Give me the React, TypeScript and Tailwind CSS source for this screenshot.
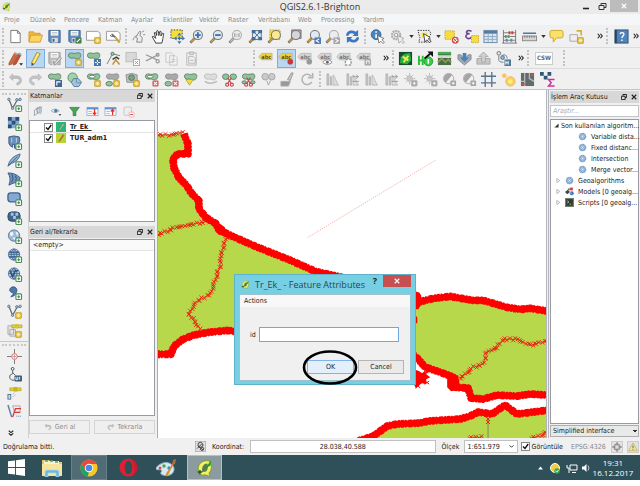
import * as React from "react";
import type { ReactNode } from "react";

type Pt = [number, number];

const GREEN = "#8fc49a";
const GREY = "#a9a9a9";

// Shared icon parts, all drawn on a 16x16 grid

const Blob = ({ c = GREEN, s = "#52705a" }: { c?: string; s?: string }) => (
  <path d="M1.500 4.500C1.500 2 4.500 1.500 7 2.500C9 3 12 1 14 2.500C15.500 4 14.500 8 12 8.500C9.500 8.500 9 7.500 7 7.500C4 8 1.500 7.500 1.500 4.500Z" fill={c} stroke={s} strokeWidth=".8" />
);

const Star = ({ c = "#e0bb3a" }: { c?: string }) => (
  <g>
    <rect x="9" y="9" width="6.500" height="6.500" rx="1" fill={c} stroke="#b8921c" strokeWidth=".6" />
    <path d="M12.250 10v4.500M10 12.250h4.500M10.700 10.700l3.100 3.100M13.800 10.700l-3.100 3.100" stroke="#fff8c9" strokeWidth=".7" />
  </g>
);

const Plus = () => (
  <g>
    <rect x="9.500" y="9.500" width="6" height="6" rx="1" fill="#fff" stroke="#4c8b55" strokeWidth="1.200" />
    <path d="M12.500 11v3M11 12.500h3" stroke="#3f8a4a" strokeWidth="1.200" />
  </g>
);

const Cross = ({ c = "#d65a5a" }: { c?: string }) => (
  <g>
    <rect x="9" y="9" width="6.500" height="6.500" rx="1" fill={c} />
    <path d="M10.500 10.500l3.500 3.500M14 10.500l-3.500 3.500" stroke="#fff" strokeWidth="1.100" />
  </g>
);

const Lens = ({ fill = "#dfe9f2", line = "#777", handle = "#d69a2d" }: { fill?: string; line?: string; handle?: string }) => (
  <g>
    <path d="M6.500 9.500L1.500 14.500" stroke="#555" strokeWidth="2.600" />
    <path d="M6 10L2 14" stroke={handle} strokeWidth="1.800" />
    <circle cx="9.500" cy="6.500" r="4.800" fill={fill} stroke={line} strokeWidth="1.100" />
  </g>
);

const Disk = ({ c = "#5f8fc4", s = "#3d5f8a" }: { c?: string; s?: string }) => (
  <g>
    <path d="M2 1.500h12v13H3.500L2 13Z" fill={c} stroke={s} />
    <rect x="4" y="2" width="8" height="5" fill="#fff" />
    <path d="M5 3.700h6M5 5.300h6" stroke="#aaa" strokeWidth=".7" />
    <rect x="5" y="9.500" width="6.500" height="5" fill="#ddd" />
    <rect x="6" y="10.500" width="2" height="3" fill={s} />
  </g>
);

const Scissors = ({ c = "#c8454b" }: { c?: string }) => (
  <g fill="none" stroke={c} strokeWidth="1.200">
    <circle cx="5.500" cy="13.500" r="1.600" />
    <circle cx="10.500" cy="13.500" r="1.600" />
    <path d="M6.300 12L10 6M9.700 12L6 6" />
  </g>
);

const Globe = () => (
  <g>
    <circle cx="7.500" cy="7" r="6" fill="#b7cee3" stroke="#56789f" />
    <path d="M1.500 7h12M7.500 1v12M3 3.500c3 1.500 6 1.500 9 0M3 10.500c3-1.500 6-1.500 9 0M7.500 1c-4 3-4 9 0 12c4-3 4-9 0-12" stroke="#3c5f8b" fill="none" strokeWidth=".8" />
  </g>
);

const Hist = () => (
  <g fill="#c6c6c6" stroke="#a3a3a3" strokeWidth=".6">
    <path d="M2 2h2v12H2ZM5.500 5h1.500v9H5.500Z" />
    <path d="M8.500 3c2 1 3 7 6 11h-6Z" fill="#dcdcdc" />
  </g>
);

const Tag = ({ c = "#d5d5d5", t = "#777" }: { c?: string; t?: string }) => (
  <g>
    <path d="M0 5.500L3 2.500H14v7H3L0 7Z" fill={c} stroke="#a5a5a5" strokeWidth=".6" />
    <text x="2.500" y="8.300" fontSize="6" fontWeight="bold" fontFamily="DejaVu Sans Condensed, sans-serif" fill={t}>abc</text>
  </g>
);

const Gear = () => (
  <g>
    <circle cx="8" cy="8" r="5.500" fill="#a9c6e6" stroke="#6c96c6" strokeWidth="2.500" strokeDasharray="2.300 1" />
    <circle cx="8" cy="8" r="4.300" fill="#b9d0ea" stroke="#5f8dc2" strokeWidth=".8" />
    <circle cx="8" cy="8" r="1.700" fill="#fff" stroke="#5f8dc2" />
  </g>
);

const Leaf = () => (
  <g>
    <path d="M11 1.500C5 1 1.500 5 2 9.500C2 13.500 5 15 8 14L12.500 15.500L11.500 12.500C14 10 15 5 11 1.500Z" fill="#eff35d" stroke="#7c9424" strokeWidth=".7" />
    <path d="M10 4C6 4 5 8 5.500 11.500L9 11C11 9 11 6 10 4Z" fill="#5c7a4d" />
    <path d="M5 12L13.500 1L12.800 6L10 7Z" fill="#249b39" />
    <path d="M1.500 11.500h4M3.500 9.800v4" stroke="#2d542a" strokeWidth="1.300" />
  </g>
);

const Sun = () => (
  <g stroke="#b5b5b5">
    <circle cx="7" cy="7" r="3" fill="#c8c8c8" />
    <path d="M7 1v2M7 11v2M1 7h2M11 7h2M3 3l1.200 1.200M11 3L9.800 4.200M3 11l1.200-1.200" />
    <rect x="9" y="9" width="6" height="6" rx="1" fill="#a8a8a8" />
  </g>
);

const Contrast = () => (
  <g>
    <circle cx="7" cy="7" r="5.500" fill="#f0f0f0" stroke="#aaa" />
    <path d="M11 3A5.500 5.500 0 1 0 4 11.500Z" fill="#a5a5a5" />
    <rect x="9" y="9" width="6" height="6" rx="1" fill="#a5a5a5" />
  </g>
);

const VNodes = () => (
  <g fill="none" stroke="#55779d">
    <path d="M2 2.500L6 12L11 3H14" strokeWidth="1.300" stroke="#666" />
    <circle cx="2" cy="2.500" r="1.300" fill="#b7cbe0" />
    <circle cx="6" cy="12" r="1.300" fill="#b7cbe0" />
    <circle cx="10.500" cy="3" r="1.300" fill="#b7cbe0" />
    <circle cx="14" cy="2.500" r="1.300" fill="#b7cbe0" />
  </g>
);

const undo = "M5 2L1.500 5.500L5 9V6.800H10C13 7 13 11 9.500 11.500V14C16 13 16 5 10 4.200H5Z";

const icons: Record<string, ReactNode> = {
  newDoc: <path d="M3 1.500h7L13 4.500v10H3ZM10 1.500v3h3" fill="#fff" stroke="#777" />,
  open: (
    <g stroke="#c99023" strokeWidth=".8">
      <path d="M1 3h5l1 1.500h6V13H1Z" fill="#f3b93c" />
      <path d="M3 6.500h12.500L13 14H1Z" fill="#fbd55f" />
    </g>
  ),
  save: <Disk />,
  saveAs: (
    <g>
      <Disk />
      <rect x="9" y="9" width="6.500" height="6.500" rx="1" fill="#417c4d" />
      <path d="M10.500 14l3.500-3.500" stroke="#fff" strokeWidth="1.200" />
    </g>
  ),
  newComposer: <g><path d="M.5 2.500h12l2.500 2v7.500H.5Z" fill="#fff" stroke="#999" /><Star /></g>,
  composerManager: (
    <g>
      <path d="M.5 2.500h12l2.500 2v7.500H.5Z" fill="#fff" stroke="#999" />
      <path d="M6 5.500L10 9" stroke="#666" strokeWidth="1.800" />
      <path d="M10 9L14.500 14.500" stroke="#caa22f" strokeWidth="2.200" />
      <path d="M4.500 6.500c.5 2 2.500 2 3.500 1" stroke="#555" fill="none" />
    </g>
  ),
  touch: (
    <g stroke="#888" fill="#eee">
      <path d="M6 14L7 10L5 9L9 2.500L10.500 3L9.500 7L12 9L11.500 14Z" />
      <path d="M2 12c1-3 2-4 4-5M12 3l2-1M13 6l2 0" fill="none" />
    </g>
  ),
  pan: <path d="M5 15C4 12 1.500 10 1.500 8C3 7.500 4 9 5 10L3.500 4C4.500 3 5.500 4 6 7L6.200 2C7.500 1 8.200 2 8.300 7L9.500 2.500C11 2 11 3.500 10.500 7.500L12.500 4.500C14 4.500 13.500 6 13 8C12.500 11 12.500 12 11.500 15Z" fill="#fff" stroke="#333" />,
  panSel: (
    <g>
      <path d="M1 1h12v9H1Z" fill="#f6df36" stroke="#333" strokeDasharray="1.500 1.500" />
      <path d="M10 4l2.200 3H7.800ZM10 16l2.200-3H7.800ZM4 10l3-2.200v4.400ZM16 10l-3-2.200v4.400Z" fill="#3d72b0" />
      <path d="M10 8v4M8 10h4" stroke="#3d72b0" strokeWidth="1.500" />
    </g>
  ),
  zoomIn: <g><Lens /><path d="M9.500 3.500v6M6.500 6.500h6" stroke="#3a74b4" strokeWidth="2" /></g>,
  zoomOut: <g><Lens /><path d="M6.500 6.500h6" stroke="#3a74b4" strokeWidth="2" /></g>,
  zoomNative: (
    <g>
      <Lens fill="#ececec" line="#aaa" handle="#bbb" />
      <path d="M7.300 4.500v4M11.700 4.500v4M9.500 5.300v.9M9.500 7.300v.9" stroke="#888" />
    </g>
  ),
  zoomFull: (
    <g>
      <Lens />
      <path d="M4 1h4v3.500H4ZM11 1h4v3.500h-4ZM4 8.500h4V12H4ZM11 8.500h4V12h-4Z" fill="#3f6da4" />
      <path d="M5 2l9 9M14 2l-9 9" stroke="#3f6da4" />
    </g>
  ),
  zoomSel: <g><path d="M3 1h11v10H3Z" fill="#f6df36" stroke="#999" strokeDasharray="1.500 1.500" /><Lens fill="#fbe98e" /></g>,
  zoomLayer: <g><path d="M5 1h10v9H5Z" fill="#bbb2be" stroke="#756a78" /><Lens fill="#d7d3da" /></g>,
  zoomLast: <g><Lens /><rect x="9" y="9" width="7" height="7" fill="#4c7fb9" /><path d="M14 10.500l-3 2l3 2" stroke="#fff" fill="none" strokeWidth="1.200" /></g>,
  zoomNext: <g><Lens fill="#ececec" line="#aaa" /><rect x="9" y="9" width="7" height="7" fill="#a7a7a7" /><path d="M11 10.500l3 2l-3 2" stroke="#fff" fill="none" strokeWidth="1.200" /></g>,
  refresh: (
    <g fill="#3b78c0">
      <path d="M1 7C1.500 2 7 0 11.500 3L14 1V7.500H8L10 5.500C7 3.500 4 4.500 3.500 7.500Z" />
      <path d="M15 9C14.500 14 9 16 4.500 13L2 15V8.500H8L6 10.500C9 12.500 12 11.500 12.500 8.500Z" />
    </g>
  ),
  identify: (
    <g>
      <circle cx="6.500" cy="6" r="5.200" fill="#4b83bf" stroke="#356496" />
      <path d="M6.500 5.500v4M6.500 2.500v1.500" stroke="#fff" strokeWidth="1.700" />
      <path d="M8 7l1.500 8l2-2l2.500 2.500l1.300-1.500L12.800 11.500l2-1.500Z" fill="#fff" stroke="#555" strokeWidth=".8" />
    </g>
  ),
  action: (
    <g>
      <circle cx="6.500" cy="6.500" r="4.500" fill="#dedede" stroke="#aaa" strokeWidth="2" strokeDasharray="2 .8" />
      <circle cx="6.500" cy="6.500" r="1.700" fill="#fff" stroke="#999" />
      <path d="M8 7l1.500 8l2-2l2.500 2.500l1.300-1.500L12.800 11.500l2-1.500Z" fill="#eee" stroke="#999" strokeWidth=".8" />
    </g>
  ),
  select: (
    <g>
      <path d="M1 1.500h12L15 5l-2 3l2 6H2l1-5Z" fill="#eee" stroke="#333" strokeDasharray="1.500 1.200" />
      <path d="M5 4h6v5H5Z" fill="#f6df36" />
      <path d="M7 5l1.500 9l2-2.500l3 3l1.300-1.500L12 10.500l2-1.500Z" fill="#fff" stroke="#444" />
    </g>
  ),
  deselect: (
    <g>
      <rect x="1" y="2" width="10" height="9" fill="#f7dc3d" stroke="#c7a92a" strokeDasharray="1.500 1" />
      <circle cx="12" cy="12" r="3" fill="#fff" stroke="#d44a4a" strokeWidth="1.400" />
      <path d="M10 10l4 4M10 14l4-4" stroke="#d44a4a" />
    </g>
  ),
  expression: (
    <g>
      <path d="M8 2.500C5 .5 2 2 3 4.500L6 5C2 5 1 8 3 9.500S7 10 8 8.500" fill="none" stroke="#6d4590" strokeWidth="1.700" />
      <rect x="8" y="7" width="7.500" height="7.500" fill="#f7dc3d" stroke="#c7a92a" strokeDasharray="1.500 1" />
    </g>
  ),
  table: (
    <g>
      <rect x="1" y="1.500" width="14" height="13" fill="#dce7f1" stroke="#6887a5" />
      <path d="M1 2h14v3H1Z" fill="#567ba1" />
      <path d="M1 8h14M1 11h14M5.500 5v9M10 5v9" stroke="#90a9c0" />
    </g>
  ),
  abacus: (
    <g>
      <path d="M1.500 1v14M14.500 1v14M1.500 4h13M1.500 8h13M1.500 12h13M0 15h16" stroke="#777" />
      <path d="M7 4h5" stroke="#d13d37" strokeWidth="3" strokeDasharray="2 1" />
      <path d="M3 8h6" stroke="#58a35c" strokeWidth="3" strokeDasharray="2 1" />
      <path d="M4 12h8" stroke="#5c87b4" strokeWidth="3" strokeDasharray="2 3" />
    </g>
  ),
  ruler: (
    <g>
      <path d="M1 4.500h14" stroke="#426e98" strokeWidth="1.500" />
      <rect x=".5" y="7.500" width="15" height="5" fill="#d5d5d5" stroke="#888" />
      <path d="M3 7v2.500M5.500 7v2.500M8 7v2.500M10.500 7v2.500M13 7v2.500" stroke="#666" strokeWidth=".7" />
    </g>
  ),
  tip: <path d="M3 1.500h10q2 0 2 2v4q0 2-2 2H8L4.500 14V9.500H3q-2 0-2-2v-4q0-2 2-2Z" fill="#fbe06a" stroke="#c9a72e" />,
  bookmark: (
    <g>
      <path d="M1 6h8v7H1Z" fill="#eee" stroke="#aaa" />
      <path d="M8 2h5v5" fill="none" stroke="#d5b02d" strokeWidth="1.700" />
      <Star />
    </g>
  ),
  help: (
    <g>
      <rect x="1" y="1" width="14" height="14" fill="#4f83bb" stroke="#34506f" />
      <path d="M2 1v14" stroke="#2e4055" strokeWidth="2" />
      <path d="M6.500 5.500C7 3 11 3.500 10.500 6C10 7.500 8.500 7.500 8.500 9.500M8.500 11.200v1.500" stroke="#fff" fill="none" strokeWidth="1.500" />
    </g>
  ),
  edits: (
    <g>
      <path d="M1 13L7 2l3 1.500L4 14L1 15Z" fill="#d9653a" stroke="#8f4b2d" strokeWidth=".7" />
      <path d="M5.500 13L11.500 2.500L14 4L8.500 14L5.500 15Z" fill="#c75030" stroke="#7f4630" strokeWidth=".7" />
      <path d="M7 2l3 1.500M11.500 2.500L14 4" stroke="#aaa" strokeWidth="2" />
      <path d="M12 13h4l-2 2.500Z" fill="#222" />
    </g>
  ),
  pencil: (
    <g>
      <path d="M4 12L9.500 1.500L13 3L7.500 13L4 15.500Z" fill="#f5d846" stroke="#8c7e39" strokeWidth=".8" />
      <path d="M6 12.500L11 2.500" stroke="#fff3a1" strokeWidth="1.200" />
      <path d="M4 12.500v3l2.500-1.500" fill="#444" />
    </g>
  ),
  saveGrey: <g><Disk c="#bcbcbc" s="#a0a0a0" /><path d="M8 13l5.500-7l2 1.500L10 14l-2 1Z" fill="#ddd" stroke="#999" /></g>,
  addFeature: <g><Blob /><Star /></g>,
  moveFeature: (
    <g>
      <Blob />
      <rect x="8.500" y="8.500" width="7.500" height="7.500" fill="#4776a9" />
      <path d="M12.200 9.500v5.500M9.500 12.200h5.500" stroke="#fff" strokeWidth="1.200" strokeDasharray="2 1.500" />
    </g>
  ),
  nodeTool: (
    <g>
      <path d="M1 14L7 3L15 5" fill="none" stroke="#777" />
      <circle cx="7" cy="3" r="1.700" fill="#9ac69b" stroke="#58815a" />
      <path d="M7 9l4-2.500l3 2" fill="none" stroke="#444" strokeWidth="1.700" />
      <path d="M7 14.500l4-6M10 9l4.500 5.500" stroke="#bf9240" strokeWidth="1.600" />
    </g>
  ),
  deleteSel: <g><rect x="1" y="1.500" width="11" height="10" fill="#d9d9d9" stroke="#bdbdbd" /><rect x="9" y="9" width="6.500" height="6.500" fill="#fff" stroke="#aaa" /><path d="M10.500 10.500l3.500 3.500M14 10.500l-3.500 3.500" stroke="#999" /></g>,
  cut: (
    <g stroke="#999" fill="none" strokeWidth="1.300">
      <path d="M1 4l12 5.500M1 10.500L14 4" />
      <circle cx="13.500" cy="11" r="1.700" />
      <circle cx="13.500" cy="4" r="1.500" />
    </g>
  ),
  copy: <path d="M2 2h6l2 2v8H2ZM6 5h6l2 2v8H6ZM8 9h4M8 11h4" fill="#f2f2f2" stroke="#c6c6c6" />,
  paste: <path d="M3 2h10v13H3ZM6 1h4v3H6ZM5 6h5l2 2v5H5ZM6.500 10h4" fill="#f1f1f1" stroke="#b5b5b5" />,
  label: <Tag c="#f1d43b" t="#5f521c" />,
  labelPin: <g><Tag c="#f1d43b" t="#5f521c" /><circle cx="12" cy="11.500" r="3" fill="#c93834" /></g>,
  labelPinGrey: <g><Tag /><circle cx="12" cy="11.500" r="3" fill="#999" /></g>,
  labelShow: <g><Tag /><path d="M5 12c3-3.500 7-3.500 10 0c-3 3-7 3-10 0Z" fill="#fff" stroke="#888" /><circle cx="10" cy="12" r="1.500" fill="#666" /></g>,
  labelMove: <g><Tag /><path d="M9 9h6v6H9Z" fill="#fff" stroke="#999" strokeWidth="1.500" strokeDasharray="2.500 1.500" /></g>,
  labelRotate: <g><Tag /><rect x="8" y="8.500" width="7" height="7" rx="1" fill="#aaa" /><path d="M10 13.500V10.500h3v3" stroke="#fff" fill="none" /></g>,
  dem: (
    <g>
      <rect x="1" y="1" width="14" height="14" fill="#164b2b" />
      <path d="M2 13L3 6L7 3L13 2L14 10L10 14Z" fill="#2fae45" />
      <path d="M5 6l6 4M11 5L6 12" stroke="#f1ef4c" strokeWidth="2" />
    </g>
  ),
  hd: (
    <g>
      <path d="M1 5v10M5 5v10M1 10h4" stroke="#27bb36" strokeWidth="2" fill="none" />
      <circle cx="11" cy="11" r="4.800" fill="#3acb48" stroke="#1a8a2a" strokeWidth=".8" />
      <path d="M11 8.500v5" stroke="#fff" strokeWidth="1.700" />
      <path d="M7 8l6-5" stroke="#111" strokeWidth="2" />
      <path d="M10 .5h6v6Z" fill="#111" />
    </g>
  ),
  photo: <g><rect x="1" y="1" width="14" height="14" fill="#4b6b43" /><path d="M1 1h14v2.500H1Z" fill="#41ae52" /><path d="M1 4.500h14v3H1Z" fill="#cfdad0" /><path d="M1 12l4-4l4 4l3-3l3 3" stroke="#81985b" strokeWidth="2" fill="none" /></g>,
  download: <g><path d="M1 4h3l4 5l4-5h3v5l-7 6l-7-6Z" fill="#a5abb0" stroke="#75808a" strokeWidth=".8" /><path d="M6 2h4v5h3l-5 5l-5-5h3Z" fill="#4d83b4" /></g>,
  upload: <g><path d="M1 8h14v6H1Z" fill="#c6c6c6" stroke="#aaa" /><path d="M6 12h4V6h3L8 1L3 6h3Z" fill="#cfcfcf" stroke="#aaa" /></g>,
  osm: (
    <g>
      <circle cx="3" cy="2.500" r="2" fill="#ddd" stroke="#777" />
      <path d="M3 5v5q0 2 5 2M6 5q5-3 6 3" stroke="#777" fill="none" />
      <circle cx="7" cy="7" r="2" fill="#95b4cd" stroke="#53758f" />
      <rect x="9" y="9" width="7" height="7" fill="#4f7999" />
      <path d="M10.500 10.500v4M13 10.500v4M10.500 12.500h2.500" stroke="#fff" />
    </g>
  ),
  undo: <path d={undo} fill="#c2c2c2" stroke="#a5a5a5" strokeWidth=".6" />,
  redo: <g transform="matrix(-1 0 0 1 16 0)"><path d={undo} fill="#c7c7c7" stroke="#a8a8a8" strokeWidth=".6" /></g>,
  rotate: <g><Blob /><rect x="8.500" y="8.500" width="7.500" height="7.500" fill="#41668f" /><path d="M10.500 14.500v-4h4" stroke="#fff" fill="none" strokeWidth="1.200" /></g>,
  simplify: <g><circle cx="6" cy="6" r="5" fill="#9fd3a8" stroke="#5c8e66" /><path d="M7 7h5l3.500 4l-3 4.500H7.500L4.500 11Z" fill="#a5c3d8" stroke="#557c99" /><path d="M10 7.500v4h5" stroke="#6e93ae" /></g>,
  ring: <g><Blob /><ellipse cx="6.500" cy="5" rx="3" ry="1.500" fill="#fff" stroke="#52705a" strokeWidth=".8" /><Star /></g>,
  part: <g><Blob c={GREY} s="#888" /><ellipse cx="4.500" cy="12.500" rx="3.500" ry="2.500" fill={GREEN} stroke="#52705a" strokeWidth=".8" /><Star /></g>,
  fillRing: <g><path d="M1 3q6-3 12 0v8H2Z" fill="#bcbcbc" stroke="#989898" /><circle cx="7" cy="6" r="3" fill="#7ba884" stroke="#54735a" /><Star /></g>,
  deleteRing: <g><Blob /><ellipse cx="6.500" cy="5" rx="3" ry="1.500" fill="#fff" stroke="#52705a" strokeWidth=".8" /><Cross /></g>,
  deletePart: <g><Blob c={GREY} s="#888" /><ellipse cx="4.500" cy="12.500" rx="3.500" ry="2.500" fill={GREEN} stroke="#52705a" strokeWidth=".8" /><Cross /></g>,
  reshape: <g><Blob /><path d="M3 8h8l-4 6Z" fill="#f5dc42" stroke="#a89a3c" strokeWidth=".8" /></g>,
  offset: <g><Blob c="#dcdcdc" s="#b5b5b5" /><path d="M2 10q5 4 13 0" stroke="#bbb" fill="none" strokeWidth="1.500" /></g>,
  split: <g><ellipse cx="4" cy="5" rx="3.500" ry="3" fill={GREEN} stroke="#52705a" strokeWidth=".8" /><ellipse cx="12" cy="5" rx="3.500" ry="3" fill={GREEN} stroke="#52705a" strokeWidth=".8" /><Scissors /></g>,
  splitPart: <g><Blob /><ellipse cx="3.500" cy="11" rx="2.500" ry="1.700" fill={GREEN} stroke="#52705a" strokeWidth=".8" /><ellipse cx="12.500" cy="11" rx="2.500" ry="1.700" fill={GREEN} stroke="#52705a" strokeWidth=".8" /><Scissors /></g>,
  merge: <g fill="#cacaca" stroke="#a5a5a5"><ellipse cx="4.500" cy="5" rx="3.500" ry="3.500" /><ellipse cx="11.500" cy="5" rx="3.500" ry="3.500" /><path d="M6 9l2 5l2-5" fill="none" /></g>,
  mergeAttr: <g><path d="M8 8L12 1h2l-3 8Z" fill="#c6c6c6" stroke="#999" /><path d="M1 10h10l-2 5H1Z" fill="#999" stroke="#aaa" /></g>,
  rotateSym: <path d="M12.500 10.500A5.500 5.500 0 1 1 12 4.500M13.500 1v5h-5" fill="none" stroke="#b3b3b3" strokeWidth="1.700" />,
  hist: <Hist />,
  histFull: <g><Hist /><path d="M8 5h6M8 10h7M12 3l2.500 2l-2.500 2" stroke="#999" fill="none" /></g>,
  sun: <g><Sun /><path d="M12 10.500v3M10.500 12h3" stroke="#fff" /></g>,
  contrast: <g><Contrast /><path d="M12 10.500v3M10.500 12h3" stroke="#fff" /></g>,
  grid: <path d="M4.500 0v16M11.500 0v16M0 4.500h16M0 11.500h16" stroke="#55738b" strokeWidth="1.400" fill="none" />,
  heat: <g><circle cx="3.500" cy="4" r="2.500" fill="#fbc45b" /><circle cx="10" cy="10" r="5" fill="#f9cf5d" stroke="#f3b268" /><circle cx="10" cy="10" r="2.300" fill="#fff37b" /></g>,
  roads: <g><rect x="1" y="1" width="14" height="14" fill="#626b6d" /><path d="M5 1v14M10 1v6l5 3M1 10h4" stroke="#bbb" strokeWidth="1.300" fill="none" /><circle cx="3.500" cy="13" r="1.500" fill="#c95350" /><circle cx="13" cy="3" r="1.500" fill="#c95350" /></g>,
  stats: <g><path d="M0 0h4v4H0ZM4 4h4v4H4ZM8 0h4v4H8Z" fill="#2f5878" /><path d="M15.500 8H9l3 3.500L9 15h6.500" stroke="#d12b98" strokeWidth="1.500" fill="none" /></g>,
  vector: <g><VNodes /><Plus /></g>,
  raster: <g><rect x="1" y="1" width="12" height="12" fill="#86a9cc" /><path d="M1 1h4v4H1ZM9 1h4v4H9ZM5 5h4v4H5ZM1 9h4v4H1Z" fill="#294f7a" /><Plus /></g>,
  postgis: <g><path d="M2 2q5-2 11 0q2 6-2 8v4H8v-4H6v3q-3-1-4-4Z" fill="#688fba" stroke="#395a80" /><path d="M5 3v5M10 3v5" stroke="#c0d3e6" /><Plus /></g>,
  spatialite: <g><path d="M1 14Q3 4 14 1Q13 8 5 11Z" fill="#91b3d2" stroke="#44678c" /><path d="M1 14L11 4" stroke="#44678c" /><Plus /></g>,
  mssql: <g><path d="M1 1q8 0 13 5l-2 6Q8 10 2 14Q5 7 1 1Z" fill="#6f94bd" stroke="#39597f" /><path d="M5 2q3 5 0 9M9 4q2 3 0 6" stroke="#34557b" fill="none" /><Plus /></g>,
  oracle: <g><rect x="1" y="2" width="13" height="9.500" rx="3" fill="#85a9d4" stroke="#3d638f" strokeWidth="1.400" /><Plus /></g>,
  sqlAny: <g><rect x="1" y="2" width="13" height="10" rx="4" fill="#3f658f" stroke="#2a486b" /><path d="M4 3h3v3H4ZM9 3h3v3H9ZM6.500 6.500h3v3h-3Z" fill="#a7c3df" /><Plus /></g>,
  wms: <g><circle cx="7.500" cy="7" r="6" fill="#9dbad6" stroke="#56789f" /><path d="M3 4l3-1l1 3l-3 2ZM9 3l3 1l-1 4ZM6 9l3 0l-1 3Z" fill="#f4f8fb" /><Plus /></g>,
  wcs: <g><Globe /><path d="M2 4h11v1.500H2ZM2 8.500h11v1.500H2Z" fill="#3f6894" /><Plus /></g>,
  wfs: <g><Globe /><path d="M3 4l3 6l3-6h3" stroke="#2d4f79" fill="none" strokeWidth="1.500" /><Plus /></g>,
  comma: <g><path d="M4 3C8 0 12 4 10 8C9 11 6 12.500 4 12.500C7 10 7 9 6 8C3 8 2 5 4 3Z" fill="#4d78aa" stroke="#34577f" /><Plus /></g>,
  newShape: <g><VNodes /><Star /></g>,
  gpx: <g><path d="M1 3h6v9H1ZM3 7h6v7H3Z" fill="#e4e4e4" stroke="#aaa" /><path d="M5 2h4v3H5ZM12 2h4v3h-4Z" fill="#e5d72d" stroke="#aa9f20" strokeWidth=".7" /><path d="M9 1h3v5H9Z" fill="#d5c535" /><Star /></g>,
  capture: <g><path d="M8 0v5M8 11v5M0 8h5M11 8h5" stroke="#777" /><circle cx="8" cy="8" r="3" fill="#fff" stroke="#d06363" /><path d="M6 8h4M8 6v4" stroke="#d06363" strokeWidth=".7" /></g>,
  evis: <g><circle cx="6" cy="2" r="1.500" fill="#fff" stroke="#444" /><path d="M6 4v3L3 9v3l2 2h3M6 6l3 3" stroke="#555" fill="none" /><rect x="8" y="9" width="8" height="6.500" rx="1" fill="#355979" /><path d="M9.500 10.500v3h2v-3M13.500 10.500v3" stroke="#fff" fill="none" /></g>,
  gps: <g><path d="M3 2h4v3H3ZM11 2h4v3h-4Z" fill="#e5d72d" stroke="#aa9f20" strokeWidth=".7" /><path d="M7 1h4v5H7Z" fill="#c4b434" /><rect x="1" y="9" width="3" height="5" fill="#cbdcea" stroke="#517597" /><path d="M6 9l2-2M6 12l3-3" stroke="#bbb" /></g>,
  trace: <g><path d="M1 1l4 13" stroke="#567fae" strokeWidth="1.500" /><path d="M6 2h8v7H8Z" fill="#eee" stroke="#aaa" /><path d="M6 14L9 5h6M8 9h6" stroke="#dd3939" fill="none" strokeWidth="1.400" /><path d="M10 13h5" stroke="#567fae" strokeDasharray="1 1" /></g>,
  group: <path d="M2 6l5-4v8l-5 4ZM5 5l5-4v8l-3 2ZM8 4l4-3v8l-2 3" fill="#e8edf2" stroke="#7d8b9b" />,
  eye: <g><path d="M0 7q5-5 12 0q-6 5-12 0Z" fill="#e8eef3" stroke="#8198ae" /><circle cx="7" cy="7" r="2.500" fill="#4a7eaf" /><path d="M11 12h4l-2 2Z" fill="#222" /></g>,
  filter: <path d="M1 2h14L10 8.500V14H6V8.500Z" fill="#4ba354" stroke="#2f753b" />,
  expand: <g><rect y="2" width="16" height="12" fill="#fff" stroke="#709bce" /><path d="M0 2h16v3H0Z" fill="#5f94dc" /><path d="M2 8h5M2 11h5" stroke="#709bce" /><path d="M11 4v8M8.500 9.500L11 12.500L13.500 9.500" stroke="#e23324" strokeWidth="1.800" fill="none" /></g>,
  collapse: <g><rect y="2" width="16" height="12" fill="#fff" stroke="#709bce" /><path d="M0 2h16v3H0Z" fill="#5f94dc" /><path d="M2 8h5M2 11h5" stroke="#709bce" /><path d="M11 13V5M8.500 8L11 5L13.500 8" stroke="#e23324" strokeWidth="1.800" fill="none" /></g>,
  remove: <g><rect x="1.500" y="1.500" width="11" height="12" rx="1" fill="#eee" stroke="#b7b7b7" /><rect x="9" y="9" width="7" height="7" rx="1" fill="#fff" stroke="#e29b9b" /><path d="M10.500 12.500h4" stroke="#d44" strokeWidth="1.500" /></g>,
  gear: <Gear />,
  models: <g><path d="M0 9l5-4l4 4l-5 4Z" fill="#444" /><circle cx="7" cy="4" r="2" fill="#777" /><path d="M9 1h5v5H9Z" fill="#d83e3a" /><circle cx="12" cy="11" r="3.500" fill="#3777c3" /><path d="M8 9l4 3" stroke="#eee" /></g>,
  scripts: <g><rect x="1" y="1" width="14" height="14" fill="#2e3b30" stroke="#74806f" strokeWidth="2" /><path d="M4 5l3 2l-3 2M8 11h3" stroke="#d7e6c9" fill="none" strokeWidth="1.200" /></g>,
  leaf: <Leaf />,
  toggle: <g><rect x=".5" y=".5" width="15" height="15" fill="#ddd" stroke="#aaa" /><path d="M5 3q4-3 6 1t-3 5q-5 0-3-6M5 8l7 5M3 11l7-7M10 9q4 0 2 4q-4 2-4-2Z" stroke="#333" fill="none" strokeWidth="1.300" /></g>,
  crs: <g><circle cx="8" cy="8" r="5" fill="#bbb" stroke="#858585" strokeWidth="1.500" /><circle cx="8" cy="8" r="2" fill="#ddd" /><path d="M8 0v4M8 12v4M0 8h4M12 8h4" stroke="#777" strokeWidth="1.500" /></g>,
  warn: <g><path d="M8 1.500L15 14H1Z" fill="#f1e6a1" stroke="#b4a24b" /><path d="M8 5.500v4.500M8 11.500v1.300" stroke="#555" strokeWidth="1.400" /></g>,
};

const Icon = ({ name, className = "size-[15px]" }: { name: string; className?: string }) => (
  <svg viewBox="0 0 16 16" className={`${className} shrink-0 overflow-visible`} fill="none" aria-hidden="true">
    {icons[name]}
  </svg>
);

const Tool = ({ name, active = false }: { name: string; active?: boolean }) => (
  <button
    type="button"
    aria-label={name}
    className={`flex h-[19px] min-w-0 items-center justify-center ${active ? "border border-[#79aee0] bg-[#b9d6f3]" : ""}`}
  >
    <Icon name={name} />
  </button>
);

const Grip = () => (
  <div className="mx-[2px] h-4 w-[2px] shrink-0 border-l-2 border-dotted border-[#c2c2c2]" />
);

const Caret = () => (
  <button type="button" aria-label="More options" className="flex w-2 shrink-0 items-center justify-center">
    <svg viewBox="0 0 6 4" className="h-[3px] w-[5px]"><path d="M0 0h6L3 4Z" fill="#333" /></svg>
  </button>
);

const More = ({ down = false }: { down?: boolean }) => (
  <button type="button" aria-label="More tools" className={`flex size-2 shrink-0 items-center justify-center ${down ? "rotate-90" : ""}`}>
    <svg viewBox="0 0 8 8" className="size-[6px]"><path d="M1 1l2.500 3L1 7M4.500 1L7 4L4.500 7" fill="none" stroke="#222" strokeWidth="1.500" /></svg>
  </button>
);

const Group = ({ names, active = [], className }: { names: string[]; active?: string[]; className: string }) => (
  <div className={`grid shrink-0 auto-cols-fr grid-flow-col items-center ${className}`}>
    {names.map((n, i) => <Tool key={i} name={n} active={active.includes(n)} />)}
  </div>
);

const DockTitle = ({ children }: { children: ReactNode }) => (
  <div className="flex h-3 shrink-0 items-center bg-[#d8d8d8] pl-px">
    <h2 className="min-w-0 flex-1 truncate">{children}</h2>
    <button type="button" aria-label="Float" className="flex w-[10px] justify-center">
      <svg viewBox="0 0 8 8" className="size-[6px]"><path d="M2.500 2.500V.7h5v4h-2M.5 3h5v4.500h-5Z" fill="none" stroke="#222" strokeWidth="1.300" /></svg>
    </button>
    <button type="button" aria-label="Close" className="flex w-[10px] justify-center">
      <svg viewBox="0 0 8 8" className="size-[6px]"><path d="M1 1l6 6M7 1L1 7" stroke="#222" strokeWidth="1.500" /></svg>
    </button>
  </div>
);

const Check = ({ id, label }: { id: string; label?: string }) => (
  <span className="grid size-[9px] shrink-0">
    <input id={id} type="checkbox" defaultChecked aria-label={label} className="peer col-start-1 row-start-1 size-[9px] appearance-none border border-[#888] bg-white" />
    <svg viewBox="0 0 9 9" className="pointer-events-none col-start-1 row-start-1 hidden size-[9px] peer-checked:block">
      <path d="M2 4.500l2 2l3.200-4.500" fill="none" stroke="#111" strokeWidth="1.400" />
    </svg>
  </span>
);

// Map geometry

const coastNW: Pt[] = [[183, 133], [187, 143], [187, 153], [177, 153], [172, 158], [173, 167], [178, 177], [186, 185], [190, 192], [198, 200], [198, 208], [205, 217], [215, 223], [218, 229], [230, 235], [255, 246], [288, 259], [315, 271], [342, 277]];
const coastNE: Pt[] = [[412, 292], [418, 302], [425, 300], [433, 298], [450, 296], [473, 300], [483, 300], [507, 307], [520, 309], [530, 308], [549, 311]];
const coastSW: Pt[] = [[156, 354], [170, 354], [173, 346], [182, 339], [192, 335], [208, 332], [228, 330], [242, 333]];
const coastSE: Pt[] = [[410, 352], [417, 358], [425, 367], [440, 372], [453, 377], [453, 387], [468, 388], [471, 398], [483, 399], [497, 395], [517, 396], [530, 394], [549, 395]];
const coastS: Pt[] = [[358, 441], [373, 436], [387, 426], [397, 424], [420, 423], [428, 421], [460, 419], [470, 416], [478, 412], [492, 414], [505, 405], [517, 414], [549, 410]];

const borders: Pt[][] = [
  [[157, 134], [170, 134], [183, 131]],
  [[157, 234], [175, 227], [205, 221], [215, 220]],
  [[226, 237], [220, 253], [220, 263], [210, 293], [195, 302], [188, 313], [200, 330]],
  [[460, 378], [467, 373], [473, 367], [483, 364], [487, 352], [497, 347], [503, 339], [517, 339], [530, 345], [549, 340]],
  [[469, 438], [483, 437]],
  [[531, 438], [541, 436], [548, 431]],
];

const line = (pts: Pt[]) => "M" + pts.map((p) => p.join(" ")).join("L");

// Vertex markers: small crosses along a border
const crosses = (pts: Pt[]) => {
  let d = "";
  for (let i = 1; i < pts.length; i++) {
    const [x0, y0] = pts[i - 1];
    const [x1, y1] = pts[i];
    const n = Math.max(1, Math.round(Math.hypot(x1 - x0, y1 - y0) / 2.4));
    for (let k = 0; k < n; k++) {
      const x = x0 + ((x1 - x0) * k) / n + Math.sin(k * 5 + i);
      const y = y0 + ((y1 - y0) * k) / n + Math.cos(k * 3 + i);
      d += `M${x - 2} ${y - 2}l4 4m0 -4l-4 4`;
    }
  }
  return d;
};

const MapCanvas = () => (
  <svg viewBox="157 89 390 349" preserveAspectRatio="xMinYMin slice" className="block h-full w-full" role="img" aria-label="Map">
    <path d={line([[157, 134], ...coastNW, ...coastNE, ...[...coastSE].reverse(), ...[...coastSW].reverse()]) + "Z"} fill="#b8d84b" />
    <path d={line([...coastS, [549, 440]]) + "Z"} fill="#b8d84b" />
    <path d="M488 418V438" stroke="#7a8a55" />
    {borders.map((b, i) => (
      <g key={i} fill="none">
        <path d={line(b)} stroke="#8a8f6a" />
        <path d={crosses(b)} stroke="#f01c08" strokeWidth=".9" />
      </g>
    ))}
    <path d="M486 417l4 4m0-4l-4 4M486 420l4 4m0-4l-4 4" stroke="#e8260c" />
    {[coastNW, coastNE, coastSW, coastSE, coastS].map((c, i) => (
      <g key={i} fill="none" stroke="#fe0000" strokeLinejoin="round">
        <path d={line(c)} strokeWidth="6.600" />
        <path d={line(c)} strokeWidth="7.800" strokeDasharray="3 1 1.500 2 4 1.300 2 .8" />
      </g>
    ))}
    <path d="M415 291l4 1l2 3v9l-3 5h-3ZM415 315l2 2v6h-2ZM447 375h11l2 12l-9 4l-4-4Z" fill="#fe0000" />
    <path d="M213 224l5 9l8 2l-3-8l-6-4Z" fill="#fe0000" stroke="#fe0000" strokeWidth="2" />
    <path d="M414 369l5 2l3 2l3-3l1 4l4 3l-4 2v5l-4-1l-4 2l-2 3l-2-3Z" fill="#fe0000" />
    <path d="M424 370l4 3m0-4l-3 6M425 381l4 3m0-3l-5 3M416 384l4 4m0-4l-5 4" stroke="#fe0000" />
    <path d="M307 237L436 159" stroke="#ef9a9a" strokeWidth=".8" strokeDasharray="1.200 1.200" />
  </svg>
);

const Dialog = () => (
  <section role="dialog" aria-labelledby="dialog-title" className="absolute top-[184px] left-[76px] w-[182px] border border-[#5fb2c8] bg-[#76cfe3] px-1 pb-[3px] text-[#222]">
    <header className="flex h-[19px] items-start">
      <Icon name="leaf" className="mt-[5px] ml-[2px] size-[9px]" />
      <h2 id="dialog-title" className="mt-1 ml-[5px] flex-1 font-['Open_Sans'] text-[9px] leading-3 whitespace-nowrap text-[#2b4650]">Tr_Ek_ - Feature Attributes</h2>
      <button type="button" aria-label="Help" className="mr-[6px] font-['Open_Sans'] text-[9px] leading-3 font-bold">?</button>
      <button type="button" aria-label="Close dialog" className="flex h-3 w-7 items-center justify-center bg-[#c84f4f]">
        <svg viewBox="0 0 8 8" className="size-[6px]"><path d="M1 1l6 6M7 1L1 7" stroke="#fff" strokeWidth="1.500" /></svg>
      </button>
    </header>
    <div className="border border-[#9fc3cd] bg-[#f0f0f0]">
      <div className="flex h-3 items-center bg-[#f8f8f9] px-1">
        <button type="button">Actions</button>
      </div>
      <form className="px-[6px] pt-[20px] pb-[6px]">
        <div className="flex items-center pr-[5px] pl-1">
          <label htmlFor="attr-id" className="w-[9px]">id</label>
          <input id="attr-id" type="text" className="h-[15px] min-w-0 flex-1 border border-[#6fa8e4] bg-white px-1 outline-none" />
        </div>
        <div className="mt-[18px] flex justify-end gap-1">
          <div className="relative">
            <button type="button" className="h-[14px] w-[47px] border border-[#7eb4ea] bg-[#e3effa]">OK</button>
            <svg viewBox="0 0 56 36" className="pointer-events-none absolute -top-[11px] -left-[5px] h-9 w-14 max-w-none" aria-hidden="true">
              <ellipse cx="28" cy="18.500" rx="26" ry="16" fill="none" stroke="#000" strokeWidth="2.600" />
            </svg>
          </div>
          <button type="button" className="h-[14px] w-[46px] border border-[#b5b5b5] bg-[#eaeaea]">Cancel</button>
        </div>
      </form>
    </div>
  </section>
);

const menus: [string, string][] = [
  ["Proje", "w-[26px]"], ["Düzenle", "w-[34px]"], ["Pencere", "w-[34px]"], ["Katman", "w-[33px]"], ["Ayarlar", "w-8"],
  ["Eklentiler", "w-[36px]"], ["Vektör", "w-[29px]"], ["Raster", "w-[30px]"], ["Veritabanı", "w-[40px]"], ["Web", "w-[23px]"],
  ["Processing", "w-[42px]"], ["Yardım", "w-[30px]"],
];

const layers = [
  { name: "Tr_Ek_", fill: "#2bb673", pen: "#b9d9c4", line: "underline" },
  { name: "TUR_adm1", fill: "#b8d432", pen: "#d8662e", line: "no-underline" },
];

const recent = ["Variable dista...", "Fixed distanc...", "Intersection", "Merge vector..."];
const providers = [["gear", "Geoalgorithms"], ["models", "Models [0 geoalg..."], ["scripts", "Scripts [0 geoalg..."]];

const LeftPanels = () => (
  <aside className="flex w-[126px] shrink-0 flex-col">
    <DockTitle>Katmanlar</DockTitle>
    <div className="flex h-[18px] items-center gap-[7px] pl-1">
      {["group", "eye", "filter", "expand", "collapse", "remove"].map((n) => (
        <button key={n} type="button" aria-label={n} className="size-[11px]"><Icon name={n} className="size-[11px]" /></button>
      ))}
    </div>
    <ul className="h-[102px] border border-[#9a9aa2] bg-white pt-px font-bold">
      {layers.map((l) => (
        <li key={l.name} className="flex h-[11px] items-center border-b border-transparent pl-[14px] first:border-[#e3e3e3]">
          <Check id={l.name} label={l.name} />
          <svg viewBox="0 0 10 10" className="ml-[3px] size-[10px]">
            <rect width="10" height="10" fill={l.fill} />
            <path d="M2.500 8.500L7 1.500L8 2.500L4 8Z" fill={l.pen} stroke="#765" strokeWidth=".4" />
          </svg>
          <span className={`ml-1 ${l.line}`}>{l.name}</span>
        </li>
      ))}
    </ul>
    <div className="mt-1 flex min-h-0 flex-1 flex-col">
      <DockTitle>Geri al/Tekrarla</DockTitle>
      <ul className="mt-px min-h-0 flex-1 border border-[#9a9aa2] bg-white">
        <li className="h-[11px] border-b border-[#e5e5e5] bg-[#fafafa] px-[3px] leading-[10px]">&lt;empty&gt;</li>
      </ul>
      <div className="flex gap-1 py-1 text-[#8d8d8d]">
        <button type="button" className="flex h-[14px] flex-1 items-center justify-center gap-[3px] border border-[#d4d4d4] bg-[#efefef]"><Icon name="undo" className="size-2" />Geri al</button>
        <button type="button" className="flex h-[14px] flex-1 items-center justify-center gap-[3px] border border-[#d4d4d4] bg-[#efefef]"><Icon name="redo" className="size-2" />Tekrarla</button>
      </div>
    </div>
  </aside>
);

const Twisty = ({ open = false }: { open?: boolean }) => (
  <svg viewBox="0 0 6 6" className="size-[5px] shrink-0">
    {open ? <path d="M5.500 .5V5.500H.5Z" fill="#333" /> : <path d="M1 .5L4.500 3L1 5.500Z" fill="#fff" stroke="#999" strokeWidth=".8" />}
  </svg>
);

const RightPanel = () => (
  <aside className="flex w-[90px] shrink-0 flex-col pt-px pr-px">
    <DockTitle>İşlem Araç Kutusu</DockTitle>
    <input type="search" aria-label="Araştır" placeholder="Araştır..." className="mt-[2px] h-3 w-full border border-[#c3c3c8] bg-white px-[2px] italic outline-none placeholder:text-[#aaa]" />
    <ul className="mt-[2px] min-h-0 flex-1 border border-[#9a9aa2] bg-white whitespace-nowrap">
      <li className="flex h-[11px] items-center gap-[2px] pl-[3px]"><Twisty open />Son kullanılan algoritm...</li>
      {recent.map((r) => (
        <li key={r} className="flex h-[11px] items-center gap-1 pl-[27px]"><Icon name="gear" className="size-[9px]" />{r}</li>
      ))}
      {providers.map(([icon, name]) => (
        <li key={name} className="flex h-[11px] items-center gap-1 pl-[5px]"><Twisty /><Icon name={icon} className="size-[9px]" />{name}</li>
      ))}
    </ul>
    <select aria-label="Interface" className="my-px h-3 w-full appearance-none border border-[#adadad] bg-[#e9e9e9] bg-[linear-gradient(45deg,transparent_50%,#333_50%),linear-gradient(-45deg,transparent_50%,#333_50%)] bg-[size:2px_3px] bg-[position:82px_4px,84px_4px] bg-no-repeat px-[2px]">
      <option>Simplified interface</option>
    </select>
  </aside>
);

const SideTools = ({ names, className }: { names: string[]; className: string }) => (
  <div className={`grid auto-rows-fr justify-items-center ${className}`}>
    {names.map((n) => (
      <button key={n} type="button" aria-label={n} className="flex min-h-0 items-center"><Icon name={n} /></button>
    ))}
  </div>
);

const Toolbars = () => (
  <div className="bg-[#f0f0f0]">
    <div className="flex h-[23px] items-center border-b border-[#dcdcdc]">
      <Grip />
      <Group className="w-[117px]" names={["newDoc", "open", "save", "saveAs", "newComposer", "composerManager"]} />
      <Grip />
      <Group className="w-[233px]" names={["touch", "pan", "panSel", "zoomIn", "zoomOut", "zoomNative", "zoomFull", "zoomSel", "zoomLayer", "zoomLast", "zoomNext", "refresh"]} />
      <Grip />
      <Group className="w-[39px]" names={["identify", "action"]} />
      <Caret />
      <Group className="w-[19px]" names={["select"]} />
      <Caret />
      <Group className="w-[97px]" names={["deselect", "expression", "table", "abacus", "ruler"]} />
      <Caret />
      <Group className="w-[39px]" names={["tip", "bookmark"]} />
      <div className="flex-1" />
      <More />
      <Grip />
      <Group className="w-[22px]" names={["help"]} />
      <More />
    </div>
    <div className="flex h-[21px] items-center border-b border-[#dcdcdc]">
      <Grip />
      <Group className="w-[195px]" active={["pencil", "addFeature"]} names={["edits", "pencil", "saveGrey", "addFeature", "moveFeature", "nodeTool", "deleteSel", "cut", "copy", "paste"]} />
      <div className="w-[50px]" />
      <Grip />
      <Group className="w-[117px]" active={["labelPin"]} names={["label", "labelPin", "labelPinGrey", "labelShow", "labelMove", "labelRotate"]} />
      <div className="w-2" />
      <More />
      <Grip />
      <Group className="w-[117px]" names={["dem", "hd", "photo", "download", "upload", "osm"]} />
      <div className="w-1" />
      <More />
      <Grip />
      <button type="button" className="mr-2 ml-1 h-[13px] border border-[#ccc] bg-white px-px text-[6px] font-bold text-[#666]">CSW</button>
      <Grip />
    </div>
    <div className="flex h-[20px] items-center">
      <Grip />
      <Group className="w-[311px]" names={["undo", "redo", "rotate", "simplify", "ring", "part", "fillRing", "deleteRing", "deletePart", "reshape", "offset", "split", "splitPart", "merge", "mergeAttr", "rotateSym"]} />
      <Grip />
      <Group className="w-[234px]" names={["hist", "histFull", "hist", "histFull", "sun", "sun", "contrast", "contrast", "grid", "heat", "roads", "stats"]} />
    </div>
  </div>
);

const StatusBar = () => (
  <footer className="flex h-[17px] items-center pr-px">
    <span className="w-[195px] pl-[3px]">Doğrulama bitti.</span>
    <button type="button" aria-label="Toggle extents"><Icon name="toggle" className="size-[11px]" /></button>
    <label htmlFor="coord" className="ml-[6px] w-[38px]">Koordinat:</label>
    <input id="coord" type="text" defaultValue="28.038,40.588" className="h-[13px] min-w-0 flex-1 border border-[#c0c0c0] bg-white text-center outline-none" />
    <label htmlFor="scale" className="ml-[6px] w-[22px]">Ölçek</label>
    <span className="relative flex items-center">
      <select id="scale" className="h-[13px] w-[54px] appearance-none border border-[#c0c0c0] bg-white px-[3px]">
        <option>1:651.979</option>
      </select>
      <svg viewBox="0 0 6 4" className="pointer-events-none absolute right-1 h-[3px] w-[5px]"><path d="M.5 .5L3 3L5.500 .5" fill="none" stroke="#333" strokeWidth="1.300" /></svg>
    </span>
    <span className="ml-[3px] flex items-center gap-[2px]">
      <Check id="render" />
      <label htmlFor="render">Görüntüle</label>
    </span>
    <span className="ml-2 w-10 text-[#888]">EPSG:4326</span>
    <button type="button" aria-label="CRS status" className="border border-[#ccc] bg-[#e2e2e2]"><Icon name="crs" className="size-[10px]" /></button>
    <button type="button" aria-label="Messages" className="ml-1 border border-[#ccc] bg-[#e2e2e2]"><Icon name="warn" className="size-[10px]" /></button>
  </footer>
);

const Taskbar = () => (
  <nav className="flex h-[25px] items-center bg-[#2f4f59] text-white">
    <button type="button" aria-label="Start" className="flex w-8 justify-center">
      <svg viewBox="0 0 18 18" className="size-[17px]"><path d="M0 2.500L7.500 1.500V8.500H0ZM8.500 1.300L18 0V8.500H8.500ZM0 9.500H7.500V16.500L0 15.500ZM8.500 9.500H18V18L8.500 16.700Z" fill="#fff" /></svg>
    </button>
    <button type="button" aria-label="Files" className="flex w-[39px] justify-center">
      <svg viewBox="0 0 22 18" className="h-[18px] w-[22px]">
        <path d="M1 1h7l2 2h11v14H1Z" fill="#e6c869" /><path d="M3 2h15v4H3Z" fill="#f5f2d5" />
        <path d="M4 2h3M9 2h3M14 3h3" stroke="#58a36b" strokeWidth="1.500" /><path d="M1 5h20v12H1Z" fill="#f8e49d" />
        <path d="M4 18v-5q0-2 2-2h10q2 0 2 2v5h-3v-4H7v4Z" fill="#70b7dc" stroke="#a7dcf2" strokeWidth=".7" />
      </svg>
    </button>
    <button type="button" aria-label="Chrome" className="flex h-full w-9 items-center justify-center border border-[#67808a] bg-[#526c76]">
      <svg viewBox="0 0 20 20" className="size-[18px]">
        <circle cx="10" cy="10" r="9.500" fill="#fbc91e" />
        <path d="M10 10L5.500 12.500L1.700 5.300A9.500 9.500 0 0 1 18.300 5.500H10Z" fill="#de4d3e" />
        <path d="M1.700 5.300L6 13L10 14L8.500 19.400A9.500 9.500 0 0 1 1.700 5.300" fill="#21a365" />
        <circle cx="10" cy="10" r="4.600" fill="#fff" /><circle cx="10" cy="10" r="3.600" fill="#4a86e8" />
      </svg>
    </button>
    <button type="button" aria-label="Opera" className="flex w-[42px] justify-center">
      <svg viewBox="0 0 20 20" className="size-[19px]"><ellipse cx="10" cy="10" rx="9.500" ry="9.500" fill="#df2034" /><ellipse cx="10" cy="10" rx="4" ry="7" fill="#2f4f59" /><path d="M12 .7A9.500 9.500 0 0 1 13 19C18 15 17 5 12 .7Z" fill="#a91528" opacity=".4" /></svg>
    </button>
    <button type="button" aria-label="Paint" className="flex w-[34px] justify-center">
      <svg viewBox="0 0 20 18" className="h-[18px] w-5">
        <path d="M7 4C12 2 19 6 18 11C17 17 9 18 5 15C4 13 7 12 5 11C3 10 0 12 0 9C1 7 4 5 7 4Z" fill="#d4eaf6" stroke="#8ab0c9" />
        <circle cx="8" cy="7" r="1.800" fill="#52a852" /><circle cx="4" cy="9" r="1.500" fill="#d84f46" /><circle cx="13" cy="9" r="1.700" fill="#4382cf" /><circle cx="12" cy="14" r="1.700" fill="#efc43c" />
        <path d="M10 17L17 5" stroke="#d98b36" strokeWidth="1.800" /><path d="M16 6L17 1L20 0L19 5Z" fill="#b56e38" />
      </svg>
    </button>
    <button type="button" aria-label="QGIS" className="ml-1 flex h-full w-[35px] items-center justify-center border border-[#b4c0c4] bg-[#8b9b9f]"><Icon name="leaf" className="size-[18px]" /></button>
    <div className="flex-1" />
    <svg viewBox="0 0 52 12" className="h-3 w-[52px]" aria-hidden="true">
      <path d="M0 7.500h5L2.500 4.500Z" fill="#fff" />
      <circle cx="17" cy="6" r="4.500" fill="#f3ce3f" stroke="#fff" /><circle cx="19" cy="9" r="2.800" fill="#36a853" /><path d="M17.500 9l1.200 1l2-2" stroke="#fff" fill="none" />
      <path d="M29 3v3h2v5M32 3h7v5h-7ZM34 10.500h4" fill="none" stroke="#fff" />
      <path d="M44 4.500h2L48.500 2v8L46 7.500h-2Z" fill="#fff" /><path d="M50 3.500q2 2.500 0 5" stroke="#ccd" fill="none" />
    </svg>
    <time className="mr-1 w-[46px] text-center font-['Open_Sans'] text-[8px] leading-[10px]">19:31<br />16.12.2017</time>
  </nav>
);

export default function App() {
  return (
    <div className="flex h-screen flex-col bg-white pb-[6px] font-['DejaVu_Sans_Condensed','DejaVu_Sans',sans-serif] text-[7px] leading-[10px] text-[#222]">
      <div className="flex min-h-0 flex-1 flex-col bg-[#f0f0f0]">
        <header className="flex h-[14px] shrink-0 items-start bg-[#ebebeb]">
          <div className="w-20 pt-[2px] pl-[2px]"><Icon name="leaf" className="size-[9px]" /></div>
          <h1 className="flex-1 text-center font-['Open_Sans'] text-[9px] leading-[14px] text-[#333]">QGIS2.6.1-Brighton</h1>
          <div className="flex w-20 items-center justify-end">
            <button type="button" aria-label="Minimize" className="w-4"><svg viewBox="0 0 16 11" className="h-[11px] w-4"><path d="M5 7.500h6" stroke="#222" strokeWidth="1.600" /></svg></button>
            <button type="button" aria-label="Restore" className="w-4"><svg viewBox="0 0 16 11" className="h-[11px] w-4"><path d="M7 4V2.500h5v4h-2M5 4.500h5v4H5Z" fill="none" stroke="#333" /></svg></button>
            <button type="button" aria-label="Close window" className="mr-[2px] flex h-3 w-7 items-center justify-center bg-[#bcbcbc]"><svg viewBox="0 0 8 8" className="size-[6px]"><path d="M1 1l6 6M7 1L1 7" stroke="#fff" strokeWidth="1.500" /></svg></button>
          </div>
        </header>
        <nav className="flex h-[11px] shrink-0 items-center bg-[#f5f6f7] pl-1 text-[#8c8c8c]">
          {menus.map(([m, w]) => <button key={m} type="button" className={`text-left ${w}`}>{m}</button>)}
        </nav>
        <Toolbars />
        <main className="flex min-h-0 flex-1 border-t border-[#c5c5c5]">
          <div className="flex w-[29px] shrink-0 flex-col border-r border-[#d2d2d2]">
            <div className="mx-[2px] mt-[3px] h-[2px] border-t-2 border-dotted border-[#c8c8c8]" />
            <SideTools className="h-[245px]" names={["vector", "raster", "postgis", "spatialite", "mssql", "oracle", "sqlAny", "wms", "wcs", "wfs", "comma", "newShape", "gpx"]} />
            <div className="mt-px border-t border-[#c8c8c8]" />
            <div className="mx-[2px] mt-[2px] h-[2px] border-t-2 border-dotted border-[#c8c8c8]" />
            <SideTools className="mt-px h-[74px]" names={["capture", "evis", "gps", "trace"]} />
            <div className="mt-auto mb-px flex pl-[7px]"><More down /></div>
          </div>
          <LeftPanels />
          <div className="relative ml-[2px] min-w-0 flex-1 border-l border-[#a9aab2] bg-white">
            <MapCanvas />
            <Dialog />
          </div>
          <div className="mr-px w-[3px] border-x border-[#b5b6bd]" />
          <RightPanel />
        </main>
        <StatusBar />
      </div>
      <Taskbar />
    </div>
  );
}
